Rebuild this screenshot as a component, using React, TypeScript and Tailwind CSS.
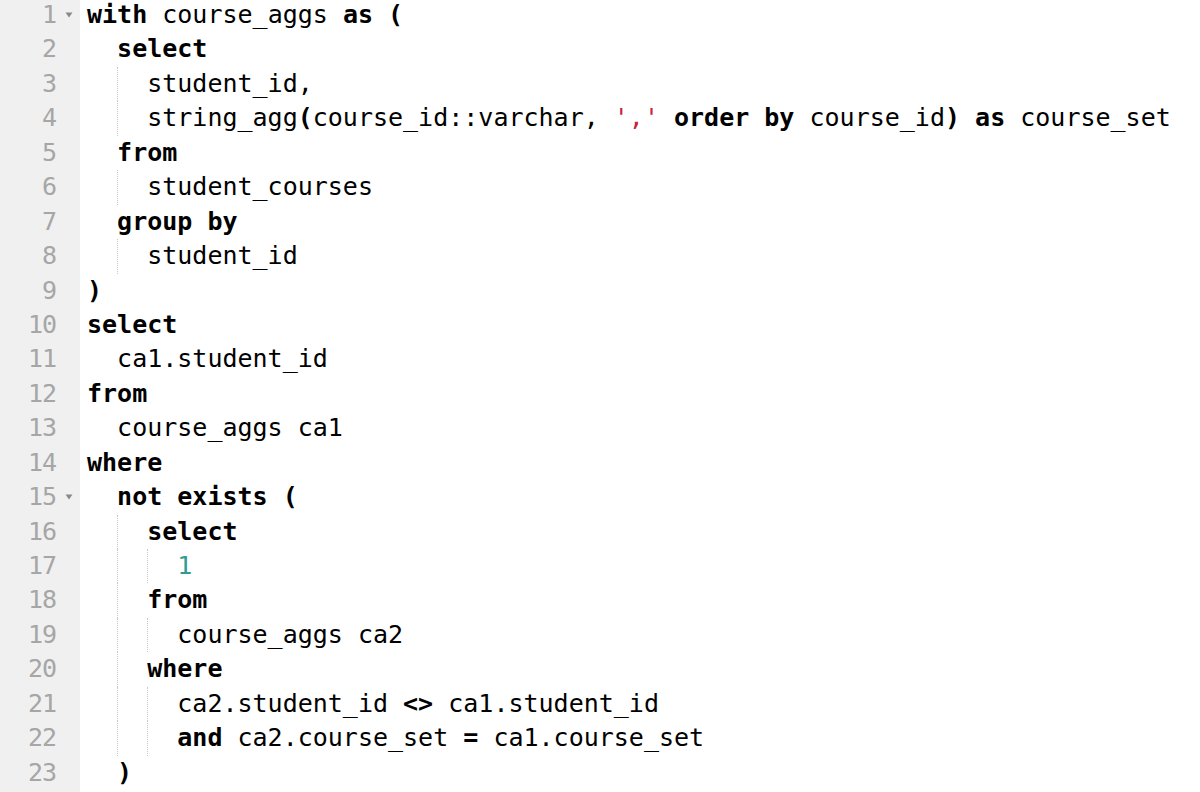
type Tok = [string, "k" | "p" | "s" | "n"];

const lines: { indent: number; fold?: boolean; toks: Tok[] }[] = [
  { indent: 0, fold: true, toks: [["with", "k"], [" course_aggs ", "p"], ["as", "k"], [" ", "p"], ["(", "k"]] },
  { indent: 2, toks: [["select", "k"]] },
  { indent: 4, toks: [["student_id,", "p"]] },
  {
    indent: 4,
    toks: [
      ["string_agg", "p"], ["(", "k"], ["course_id::varchar, ", "p"], ["','", "s"], [" ", "p"],
      ["order by", "k"], [" course_id", "p"], [")", "k"], [" ", "p"], ["as", "k"], [" course_set", "p"],
    ],
  },
  { indent: 2, toks: [["from", "k"]] },
  { indent: 4, toks: [["student_courses", "p"]] },
  { indent: 2, toks: [["group by", "k"]] },
  { indent: 4, toks: [["student_id", "p"]] },
  { indent: 0, toks: [[")", "k"]] },
  { indent: 0, toks: [["select", "k"]] },
  { indent: 2, toks: [["ca1.student_id", "p"]] },
  { indent: 0, toks: [["from", "k"]] },
  { indent: 2, toks: [["course_aggs ca1", "p"]] },
  { indent: 0, toks: [["where", "k"]] },
  { indent: 2, fold: true, toks: [["not exists", "k"], [" ", "p"], ["(", "k"]] },
  { indent: 4, toks: [["select", "k"]] },
  { indent: 6, toks: [["1", "n"]] },
  { indent: 4, toks: [["from", "k"]] },
  { indent: 6, toks: [["course_aggs ca2", "p"]] },
  { indent: 4, toks: [["where", "k"]] },
  { indent: 6, toks: [["ca2.student_id ", "p"], ["<>", "k"], [" ca1.student_id", "p"]] },
  { indent: 6, toks: [["and", "k"], [" ca2.course_set ", "p"], ["=", "k"], [" ca1.course_set", "p"]] },
  { indent: 2, toks: [[")", "k"]] },
];

const tokClass = {
  k: "font-bold text-black",
  p: "text-black",
  s: "text-[#c8233f]",
  n: "text-[#2f9a96]",
};

// indent guides: one dotted line per indent level after the first
function Indent({ n }: { n: number }) {
  const levels = Math.floor(n / 2);
  return (
    <>
      {Array.from({ length: levels }).map((_, i) => (
        <span
          key={i}
          className={
            "inline-block w-[2ch] shrink-0 " +
            (i > 0 ? "border-l border-dotted border-[#c8c8c8]" : "")
          }
        />
      ))}
    </>
  );
}

export default function App() {
  return (
    <div className="h-[792px] w-[1200px] overflow-hidden bg-white flex font-['DejaVu_Sans_Mono',monospace] text-[25px] leading-[34.45px]">
      <div className="w-[80px] bg-[#f0f0f0] -mt-[2px] shrink-0">
        {lines.map((l, i) => (
          <div key={i} className="flex h-[34.45px] items-center text-[#a6a6a6]">
            <span className="w-[56px] text-right tracking-[-1px]">{i + 1}</span>
            <span className="w-[24px] flex justify-center pl-[1px]">
              {l.fold && (
                <svg width="8" height="6" viewBox="0 0 8 6">
                  <path d="M0.5 0.5 H7.5 L4 5.5 Z" fill="#8a8a8a" />
                </svg>
              )}
            </span>
          </div>
        ))}
      </div>
      <div className="pl-[7px] -mt-[2px] flex-1 whitespace-pre">
        {lines.map((l, i) => (
          <div key={i} className="flex h-[34.45px] items-stretch">
            <Indent n={l.indent} />
            <span className="self-center">
              {l.toks.map((t, j) => (
                <span key={j} className={tokClass[t[1]]}>
                  {t[0]}
                </span>
              ))}
            </span>
          </div>
        ))}
      </div>
    </div>
  );
}
